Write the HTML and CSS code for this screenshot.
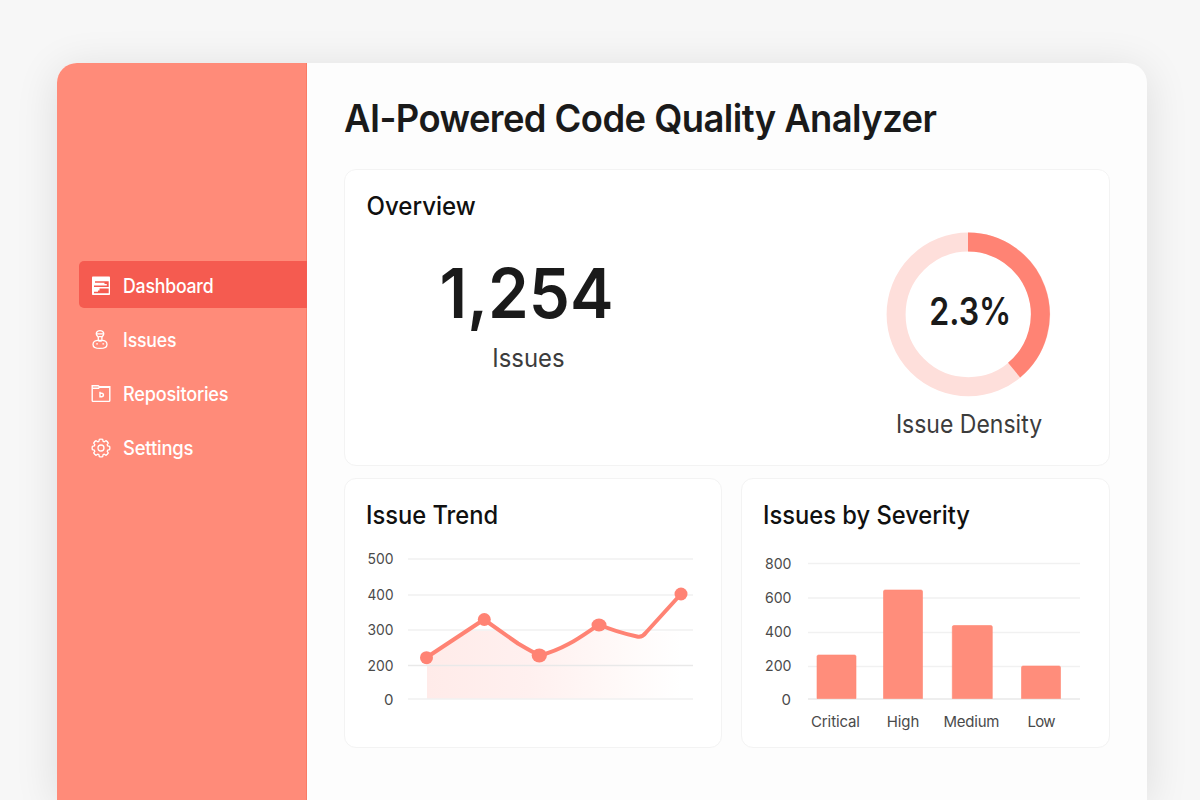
FILE: index.html
```html
<!DOCTYPE html>
<html lang="en">
<head>
<meta charset="utf-8">
<title>AI-Powered Code Quality Analyzer</title>
<link rel="stylesheet" href="styles.css">
</head>
<body>
<div class="window">
  <nav class="sidebar">
    <a class="nav-item active">
      <svg class="icon" viewBox="0 0 20 20"><rect x="1" y=".5" width="18" height="18.500" rx=".8" fill="#fff"/><path d="M4 5.200H17.700V9.400H15.800V8H13.500V6.700H4zM3 9.600H17.700V10.900H3zM8.500 12.600H17.700V17.200H3V15.800H7V14.500H8.500z" fill="#f55b50"/></svg>
      <span class="nav-dashboard">Dashboard</span>
    </a>
    <a class="nav-item">
      <svg class="icon" viewBox="0 0 20 20" fill="none" stroke="#fff" stroke-width="1.300"><path d="M7.200 7C3.800 4.200 5.300 .7 9 .7s5.200 3.500 1.900 6.300"/><path d="M5.600 3.900h7M7.300 6.700h3.600M7.300 6.700v4M10.900 6.700v4"/><path d="M7.300 10.300C4.500 10.300 2 11.500 2 14.400c0 3.200 2.600 4 7 4s7-.8 7-4c0-2.900-2.500-4.100-5.200-4.100z"/><path d="M5.200 13.900h1.700M11.400 13.900h1.700M7.300 10.700q1.800 1 3.600 0"/></svg>
      <span class="nav-issues">Issues</span>
    </a>
    <a class="nav-item">
      <svg class="icon" viewBox="0 0 20 20" fill="none" stroke="#fff" stroke-width="1.400"><path d="M1.200 16.600V1.800h6l1.300 1h10.300v13.800q0 .8-.8.800H2q-.8 0-.8-.8z"/><path d="M1.500 4.200h6l1-1H18.500"/><path d="M9 7.700v5h1.800q1.900-.4 1.600-2.200-.3-1.200-1.700-1.300H9"/></svg>
      <span class="nav-repositories">Repositories</span>
    </a>
    <a class="nav-item">
      <svg class="icon" viewBox="0 0 20 20" fill="none" stroke="#fff" stroke-width="1.300" stroke-linejoin="round"><path d="M7.900 3.300L8.300 1.400Q10 .8 11.700 1.400L12.100 3.300 13.300 3.800 14.900 2.700Q16.500 3.500 17.300 5.100L16.200 6.700 16.700 7.900 18.600 8.300Q19.200 10 18.600 11.700L16.700 12.100 16.200 13.300 17.300 14.900Q16.500 16.500 14.900 17.300L13.300 16.200 12.100 16.700 11.700 18.600Q10 19.200 8.300 18.600L7.900 16.700 6.700 16.200 5.100 17.300Q3.500 16.500 2.700 14.900L3.800 13.300 3.300 12.100 1.400 11.700Q.8 10 1.400 8.300L3.300 7.900 3.800 6.700 2.700 5.100Q3.500 3.500 5.100 2.700L6.700 3.800z"/><circle cx="10" cy="10" r="3"/></svg>
      <span class="nav-settings">Settings</span>
    </a>
  </nav>
  <main class="content">
    <h1 class="title">AI-Powered Code Quality Analyzer</h1>
    <div class="cards">
      <section class="card overview">
        <h2 class="card-title overview-title">Overview</h2>
        <div class="stats">
          <div class="stat">
            <div class="big">1,254</div>
            <div class="stat-label">Issues</div>
          </div>
          <div class="density">
            <svg class="ring" viewBox="0 0 164 164">
              <circle cx="82.400" cy="82.400" r="72.300" fill="none" stroke="#fedfdb" stroke-width="19"/>
              <path d="M82 10.100A72.300 72.300 0 0 1 128.100 138.100" fill="none" stroke="#ff8374" stroke-width="19"/>
              <text x="84.300" y="93" class="ring-value" textLength="82" lengthAdjust="spacingAndGlyphs">2.3%</text>
            </svg>
            <div class="stat-label density-label">Issue Density</div>
          </div>
        </div>
      </section>
      <section class="card trend">
        <h2 class="card-title trend-title">Issue Trend</h2>
        <svg class="chart trend-chart" viewBox="0 0 336 190">
          <defs><linearGradient id="area" x1="0" x2="1" y1="0" y2="0"><stop offset="0" stop-color="#ffebe9"/><stop offset=".4" stop-color="#fff0ef"/><stop offset=".75" stop-color="#fff9f8"/><stop offset="1" stop-color="#fff"/></linearGradient></defs>
          <path d="M61 159V119L104 90.500H131L174 116.500Q203 108 228 90.500H252L275 98 281 93 315 90.500V159z" fill="url(#area)"/>
          <path d="M42 19H327M42 55H327M42 90H327M42 159H327" class="grid"/>
          <path d="M42 125.500H327" class="grid grid-dark"/>
          <path d="M60.500 117.500L118 79.500 152 103.500Q168 113 174 115.500C200 108.500 215 96.500 233 84.500Q250 92 271 96.500Q276 98 280 92.500L315 54" class="line"/>
          <g fill="#ff8374"><circle cx="60.500" cy="117.700" r="6.500"/><circle cx="118.300" cy="79.500" r="6.500"/><ellipse cx="173.300" cy="115.500" rx="7.600" ry="7"/><ellipse cx="233" cy="85" rx="7.500" ry="6.500"/><circle cx="315" cy="54" r="6.500"/></g>
          <g class="axis"><text x="27.500" y="24" textLength="26" lengthAdjust="spacingAndGlyphs">500</text><text x="27.500" y="60" textLength="26" lengthAdjust="spacingAndGlyphs">400</text><text x="27.500" y="95" textLength="26" lengthAdjust="spacingAndGlyphs">300</text><text x="27.500" y="131" textLength="26" lengthAdjust="spacingAndGlyphs">200</text><text x="27.500" y="164.500">0</text></g>
        </svg>
      </section>
      <section class="card severity">
        <h2 class="card-title severity-title">Issues by Severity</h2>
        <svg class="chart severity-chart" viewBox="0 0 336 190">
          <path d="M46 23.500H318M46 58H318M46 92.500H318M46 126.500H318" class="grid"/>
          <path d="M46 159H318" class="grid grid-dark"/>
          <g class="bars"><path d="M55 158.500v-42q0-1.500 1.500-1.500h36q1.500 0 1.500 1.500v42z"/><path d="M121.500 158.500v-107q0-1.500 1.500-1.500h36q1.500 0 1.500 1.500v107z"/><path d="M190.300 158.500v-71.500q0-1.500 1.500-1.500h37q1.500 0 1.500 1.500v71.500z"/><path d="M259.500 158.500v-31q0-1.500 1.500-1.500h36q1.500 0 1.500 1.500v31z"/></g>
          <g class="axis"><text x="29.500" y="29" textLength="26.500" lengthAdjust="spacingAndGlyphs">800</text><text x="29.500" y="63" textLength="26.500" lengthAdjust="spacingAndGlyphs">600</text><text x="29.500" y="97" textLength="26.500" lengthAdjust="spacingAndGlyphs">400</text><text x="29.500" y="131" textLength="26.500" lengthAdjust="spacingAndGlyphs">200</text><text x="29" y="164.500">0</text></g>
          <g class="axis names"><text x="73.500" y="186.600" textLength="49">Critical</text><text x="141" y="186.600" textLength="32.500">High</text><text x="209.500" y="186.600" textLength="56">Medium</text><text x="279.500" y="186.600" textLength="28">Low</text></g>
        </svg>
      </section>
    </div>
  </main>
</div>
</body>
</html>
```
FILE: styles.css
```css
* { box-sizing: border-box; }
body {
  margin: 0;
  height: 800px;
  overflow: hidden;
  padding: 63px 53px 0 57px;
  background: #f7f7f7;
  font-family: Inter, "Liberation Sans", sans-serif;
  color: #1a1a1a;
}
.window {
  display: flex;
  height: 737px;
  background: #fdfdfd;
  border-radius: 20px 20px 0 0;
  overflow: hidden;
  box-shadow: 0 6px 44px rgba(0, 0, 0, 0.11);
}
.sidebar {
  flex: 0 0 250px;
  padding: 198px 0 0 21.5px;
  background: #ff8b79;
  border-right: 1px solid #fb7b65;
  display: flex;
  flex-direction: column;
  gap: 7px;
}
.nav-item {
  display: flex;
  align-items: center;
  flex: 0 0 47px;
  padding: 2px 0 0 12.5px;
  gap: 12.3px;
  color: #fff;
  font-size: 19.5px;
  font-weight: 500;
  line-height: 24px;
}
.nav-item span { letter-spacing: -0.2px; transform-origin: left; padding-top: 1px; }
.nav-dashboard { transform: scaleX(0.905); }
.nav-issues { transform: scaleX(0.905); }
.nav-repositories { transform: scaleX(0.928); }
.nav-settings { transform: scaleX(0.945); }
.active {
  background: #f55b50;
  border-radius: 5px 0 0 5px;
  margin-right: -1px;
}
.icon { width: 20px; height: 20px; }
.content { flex: 1; padding: 31px 36px 0 37px; }
.title {
  margin: 0;
  font-size: 38px;
  font-weight: 560;
  line-height: 48px;
  letter-spacing: -0.6px;
  white-space: nowrap;
  transform: scaleX(0.958);
  transform-origin: left;
}
.cards {
  display: grid;
  grid-template-columns: 378px 369px;
  grid-template-rows: 297px 269.5px;
  column-gap: 19px;
  row-gap: 12px;
  margin-top: 27px;
}
.card {
  background: #fff;
  border: 1px solid #f3f3f3;
  border-radius: 12px;
  padding: 20px 21px 0;
}
.overview { grid-column: 1 / 3; }
.card-title {
  margin: 0;
  font-size: 25px;
  font-weight: 500;
  line-height: 32px;
  color: #101010;
  white-space: nowrap;
  transform-origin: left;
}
.overview-title { transform: translateX(0.5px) scaleX(0.963); }
.trend-title { transform: scaleX(0.948); }
.severity-title { transform: scaleX(0.948); }
.stats { display: flex; justify-content: space-between; }
.stat { margin-left: 60.5px; width: 203px; text-align: center; }
.big {
  margin: 30px 4px 0 0;
  font-size: 68.5px;
  font-weight: 600;
  line-height: 82px;
  white-space: nowrap;
  transform: translateY(0.5px) scaleX(0.955);
}
.stat-label {
  margin-top: 9px;
  font-size: 25px;
  line-height: 30px;
  color: #3c3c3c;
  white-space: nowrap;
  transform: scaleX(0.955);
}
.density { width: 164px; margin: 10px 38px 0 0; text-align: center; }
.ring { display: block; width: 164px; height: 164px; overflow: visible; }
.ring-value { font-size: 38px; font-weight: 600; fill: #1a1a1a; text-anchor: middle; }
.density-label { margin: 13px -11px 0 -9px; transform: scaleX(0.92); }
.chart { display: block; width: 336px; height: 190px; overflow: visible; }
.trend-chart { margin: 8.5px 0 0 -0.5px; }
.severity-chart { margin: 8.5px 0 0 -1.5px; }
.grid { stroke: #f1f1f1; stroke-width: 1.4; fill: none; }
.grid-dark { stroke: #e9e9e9; }
.line { stroke: #ff8374; stroke-width: 4; fill: none; stroke-linejoin: round; }
.axis { font-size: 15px; fill: #4a4a4a; text-anchor: end; }
.names { text-anchor: middle; }
.bars { fill: #ff8d7b; stroke: #ff8672; stroke-width: 0.6; }
```
